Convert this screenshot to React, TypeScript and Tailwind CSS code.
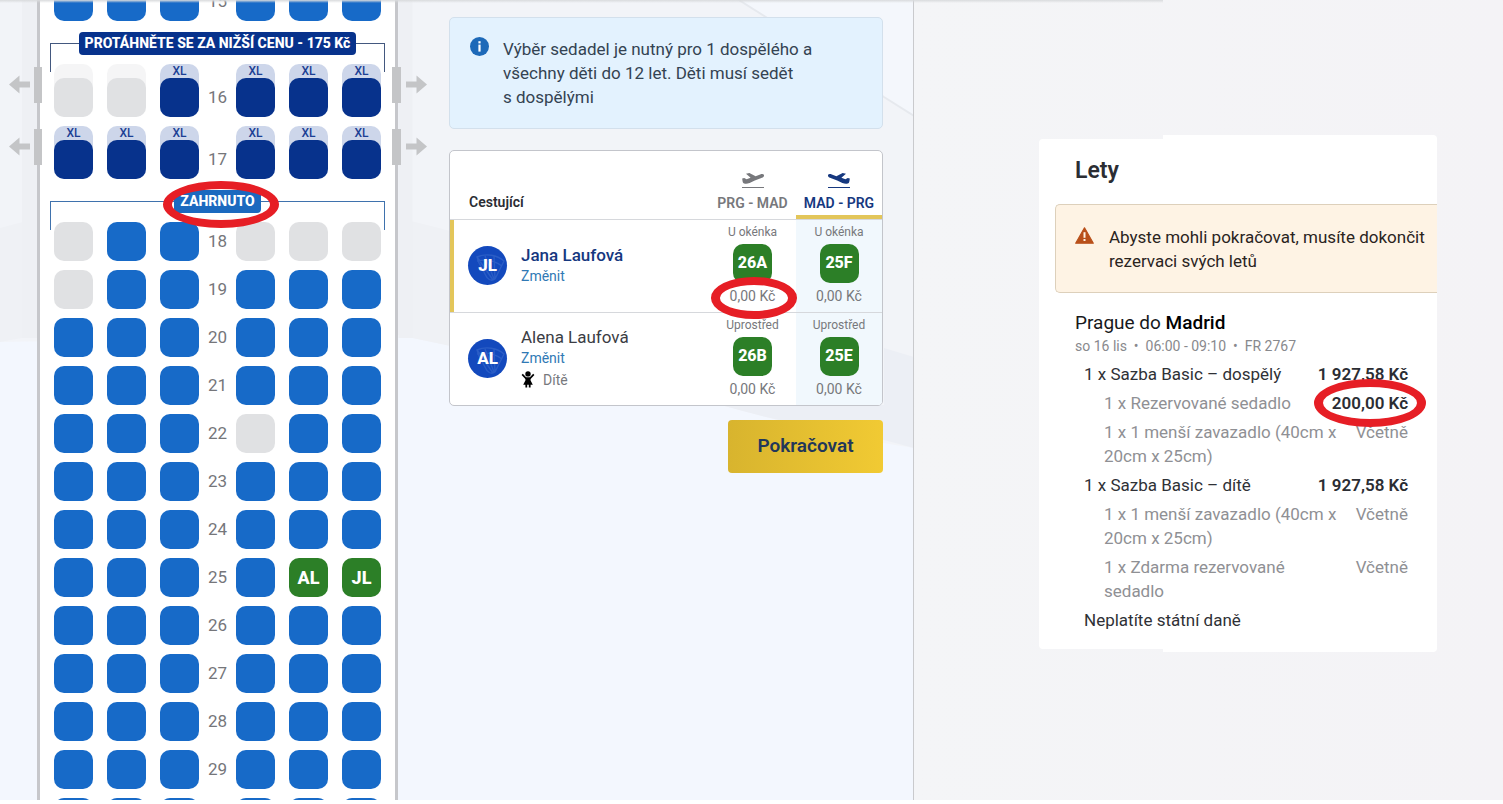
import { useState } from 'react';

type SeatKind = 'blue' | 'navy' | 'grey' | 'mine';

interface SeatRow {
  row: number;
  // one letter per seat: b = included, n = XL, x = taken
  seats: string;
  initials?: Record<number, string>;
}

interface PassengerSeat {
  position: string;
  seat: string;
  price: string;
}

interface Passenger {
  name: string;
  initials: string;
  child: boolean;
  seats: PassengerSeat[];
}

interface PriceLine {
  label: string;
  value?: string;
  nested?: boolean;
  bold?: boolean;
  circled?: boolean;
}

const COLUMNS = ['A', 'B', 'C', 'D', 'E', 'F'];

const legroomRows: SeatRow[] = [
  { row: 16, seats: 'xxnnnn' },
  { row: 17, seats: 'nnnnnn' },
];

const includedRows: SeatRow[] = [
  { row: 18, seats: 'xbbxxx' },
  { row: 19, seats: 'xbbbbb' },
  { row: 20, seats: 'bbbbbb' },
  { row: 21, seats: 'bbbbbb' },
  { row: 22, seats: 'bbbxbb' },
  { row: 23, seats: 'bbbbbb' },
  { row: 24, seats: 'bbbbbb' },
  { row: 25, seats: 'bbbbbb', initials: { 4: 'AL', 5: 'JL' } },
  { row: 26, seats: 'bbbbbb' },
  { row: 27, seats: 'bbbbbb' },
  { row: 28, seats: 'bbbbbb' },
  { row: 29, seats: 'bbbbbb' },
  { row: 30, seats: 'bbbbbb' },
];

const passengers: Passenger[] = [
  {
    name: 'Jana Laufová',
    initials: 'JL',
    child: false,
    seats: [
      { position: 'U okénka', seat: '26A', price: '0,00 Kč' },
      { position: 'U okénka', seat: '25F', price: '0,00 Kč' },
    ],
  },
  {
    name: 'Alena Laufová',
    initials: 'AL',
    child: true,
    seats: [
      { position: 'Uprostřed', seat: '26B', price: '0,00 Kč' },
      { position: 'Uprostřed', seat: '25E', price: '0,00 Kč' },
    ],
  },
];

const priceLines: PriceLine[] = [
  { label: '1 x Sazba Basic – dospělý', value: '1 927,58 Kč', bold: true },
  { label: '1 x Rezervované sedadlo', value: '200,00 Kč', nested: true, bold: true, circled: true },
  { label: '1 x 1 menší zavazadlo (40cm x 20cm x 25cm)', value: 'Včetně', nested: true },
  { label: '1 x Sazba Basic – dítě', value: '1 927,58 Kč', bold: true },
  { label: '1 x 1 menší zavazadlo (40cm x 20cm x 25cm)', value: 'Včetně', nested: true },
  { label: '1 x Zdarma rezervované sedadlo', value: 'Včetně', nested: true },
  { label: 'Neplatíte státní daně' },
];

const seatNotice =
  'Výběr sedadel je nutný pro 1 dospělého a všechny děti do 12 let. Děti musí sedět s\u00a0dospělými';

const seatColors: Record<SeatKind, string> = {
  blue: 'bg-[#176ac8]',
  navy: 'bg-[#07328c]',
  grey: 'bg-[#e0e1e3]',
  mine: 'bg-[#2c7f27]',
};

function Backdrop() {
  return (
    <svg
      className="absolute inset-0 -z-10 h-full w-full"
      viewBox="0 0 913 800"
      preserveAspectRatio="none"
      aria-hidden="true"
    >
      <rect width="913" height="800" fill="#f3f7fe" />
      <path d="M0 0H913V448C850 438 790 424 720 405C620 380 520 360 398 335L0 342Z" fill="#f2f4f8" />
      <path d="M0 228L38 218V335L0 342Z" fill="#eff1f5" />
      <path d="M398 218L450 231V346L398 335Z" fill="#eff1f5" />
      <path d="M883 348L913 357V448L883 440C830 432 780 422 720 405H883Z" fill="#eceff5" />
      <path d="M738 0H913V116L883 97L765 17Z" fill="#f4f7fc" />
      <path d="M738 0L765 17L883 97L913 116" fill="none" stroke="#e6e9ee" strokeWidth="2" />
      <path d="M22 0H38V338H22ZM398 0H412V338H398Z" fill="#eef0f4" />
    </svg>
  );
}

function Circled({ className }: { className: string }) {
  return (
    <span
      className={`pointer-events-none absolute z-10 rounded-[50%] border-x-[9px] border-y-[8px] border-[#e61e25] ${className}`}
    />
  );
}

function ArrowIcon({ flip }: { flip?: boolean }) {
  return (
    <svg width="21" height="19" viewBox="0 0 21 19" fill="#c4c5c7" className={flip ? 'rotate-180' : ''}>
      <path d="M0 9.5L10.5 .5V6.5H21V12.5H10.5V18.5Z" />
    </svg>
  );
}

function Exits() {
  return (
    <>
      <div className="absolute right-full top-0 mr-3 flex h-[41px] items-center gap-1">
        <ArrowIcon />
        <span className="h-9 w-2 bg-[#c4c5c7]" />
      </div>
      <div className="absolute left-full top-0 ml-[11px] flex h-[41px] items-center gap-[5px]">
        <span className="h-9 w-[9px] bg-[#c4c5c7]" />
        <ArrowIcon flip />
      </div>
    </>
  );
}

function Seat({ id, kind, xl, text }: { id: string; kind: SeatKind; xl?: boolean; text?: string }) {
  const body = (
    <span
      className={`flex h-[39px] w-[39px] items-center justify-center rounded-[10px] text-lg font-extrabold text-white ${seatColors[kind]}`}
    >
      {text}
    </span>
  );
  return (
    <button type="button" aria-label={`Sedadlo ${id}`} disabled={kind === 'grey'} className="block">
      {xl ? (
        <span className={`block rounded-[10px] ${kind === 'grey' ? 'bg-[#f5f5f6]' : 'bg-[#cdd6ea]'}`}>
          <span className="block h-[14px] text-center text-xs leading-[15px] font-medium text-[#1c3f94]">
            {kind === 'grey' ? '' : 'XL'}
          </span>
          {body}
        </span>
      ) : (
        body
      )}
    </button>
  );
}

function SeatMapRow({ data, xl }: { data: SeatRow; xl?: boolean }) {
  const renderSeat = (index: number) => {
    const text = data.initials?.[index];
    const code = data.seats[index];
    let kind: SeatKind = 'blue';
    if (text) kind = 'mine';
    else if (code === 'n') kind = 'navy';
    else if (code === 'x') kind = 'grey';
    return <Seat key={index} id={`${data.row}${COLUMNS[index]}`} kind={kind} xl={xl} text={text} />;
  };

  return (
    <div className="relative flex items-end">
      <div className="flex gap-[14px]">{[0, 1, 2].map(renderSeat)}</div>
      <div className="w-[37px] text-center text-[17px] leading-[39px] text-[#75767a]">{data.row}</div>
      <div className="flex gap-[14px]">{[3, 4, 5].map(renderSeat)}</div>
      {xl && <Exits />}
    </div>
  );
}

function ZoneLabel({ text, included }: { text: string; included?: boolean }) {
  return (
    <div className="relative flex justify-center">
      <div
        className={`pointer-events-none absolute -inset-x-1 top-[11px] h-[29px] border-x border-t ${
          included ? 'border-[#3f72ad]' : 'border-[#43587f]'
        }`}
      />
      <div
        className={`relative rounded-[4px] px-[6px] text-sm leading-[23px] font-extrabold whitespace-nowrap text-white ${
          included ? 'bg-[#1b69bf]' : 'bg-[#07328c]'
        }`}
      >
        {text}
        {included && <Circled className="-top-[9px] -right-[18px] -bottom-[15px] -left-[11px]" />}
      </div>
    </div>
  );
}

function SeatMap() {
  return (
    <section aria-label="Mapa sedadel" className="pl-[37px]">
      <div className="w-[361px] border-x-[3px] border-[#c6c7cb] bg-white px-[14px]">
        <div className="-mt-[18px] flex flex-col">
          <SeatMapRow data={{ row: 15, seats: 'bbbbbb' }} />
          <div className="mt-[11px] mb-[9px]">
            <ZoneLabel text="PROTÁHNĚTE SE ZA NIŽŠÍ CENU - 175 Kč" />
          </div>
          <div className="flex flex-col gap-[9px]">
            {legroomRows.map(r => (
              <SeatMapRow key={r.row} data={r} xl />
            ))}
          </div>
          <div className="mt-[11px] mb-[9px]">
            <ZoneLabel text="ZAHRNUTO" included />
          </div>
          <div className="flex flex-col gap-[9px]">
            {includedRows.map(r => (
              <SeatMapRow key={r.row} data={r} />
            ))}
          </div>
        </div>
      </div>
    </section>
  );
}

function InfoIcon() {
  return (
    <svg width="19" height="19" viewBox="0 0 19 19" className="shrink-0" aria-hidden="true">
      <circle cx="9.5" cy="9.5" r="9.5" fill="#1d69b8" />
      <rect x="8.4" y="4.2" width="2.2" height="2.2" fill="#fff" />
      <rect x="8.4" y="7.6" width="2.2" height="7" fill="#fff" />
    </svg>
  );
}

function WarningIcon() {
  return (
    <svg width="19" height="17" viewBox="0 0 19 17" className="shrink-0" aria-hidden="true">
      <path d="M9.5.8L18.3 16.2H.7Z" fill="#b9501a" stroke="#b9501a" strokeWidth="1.2" strokeLinejoin="round" />
      <rect x="8.5" y="5.2" width="2" height="5.6" fill="#fef3e4" />
      <rect x="8.5" y="12" width="2" height="2" fill="#fef3e4" />
    </svg>
  );
}

function PlaneIcon({ back }: { back?: boolean }) {
  return (
    <svg
      width="22"
      height="16"
      viewBox="0 0 22 16"
      fill="currentColor"
      className={back ? '-scale-x-100' : ''}
      aria-hidden="true"
    >
      <path d="M.2 5.4L2.2 4.9L4.6 6.2L8.6 4.8L4 .8L7.4 0L13.6 3.2L18.2 1.5C20.2.8 21.6 1.1 22 2.1C22.3 3.2 21.4 4.2 20 4.8L12.8 7.6L7.6 10C5 11.1 2 11 1.1 9.7C.6 8.7.4 7 .2 5.4Z" />
      <rect y="14" width="22" height="1" />
    </svg>
  );
}

function ChildIcon() {
  return (
    <svg width="14" height="17" viewBox="0 0 14 17" aria-hidden="true">
      <circle cx="7" cy="2.9" r="2.7" />
      <path d="M1.2 3.4L5 7.4H9L12.8 3.4" fill="none" stroke="#000" strokeWidth="1.7" />
      <path d="M4.6 6.6H9.4L9.6 9.4L11.8 13.8H9.6V16.6H7.8V13.8H6.2V16.6H4.4V13.8H2.2L4.4 9.4Z" />
    </svg>
  );
}

function Avatar({ initials }: { initials: string }) {
  return (
    <span className="relative flex h-[39px] w-[39px] shrink-0 items-center justify-center overflow-hidden rounded-full bg-[#1349bd]">
      <svg className="absolute inset-0" width="39" height="39" viewBox="0 0 39 39" aria-hidden="true">
        <path
          d="M9 11C18 7 29 9 36 15L27 33C23 36 19 33 17 28L11 17ZM9 11L25 34M17 10L26 33M26 10L27 33M9 15C18 13 27 15 34 20"
          fill="none"
          stroke="#2a5dc6"
          strokeWidth="1.4"
        />
      </svg>
      <span className="relative text-[17px] font-extrabold text-white">{initials}</span>
    </span>
  );
}

function PassengerTable() {
  const [active, setActive] = useState(0);

  return (
    <div className="mt-[21px] overflow-hidden rounded-[5px] border border-[#c3c5cb] bg-white">
      <table className="w-full table-fixed border-collapse">
        <colgroup>
          <col />
          <col className="w-[87px]" />
          <col className="w-[86px]" />
        </colgroup>
        <thead>
          <tr className="h-[68px] border-b border-[#d6d8dc] text-sm">
            <th className="p-0 pb-[7px] pl-[19px] text-left align-bottom font-semibold text-[#2b2d33]">Cestující</th>
            <th className="p-0 pb-[6px] align-bottom font-semibold text-[#77787c]">
              <span className="mb-1 flex justify-center">
                <PlaneIcon />
              </span>
              <span className="whitespace-nowrap">PRG - MAD</span>
            </th>
            <th className="p-0 pb-[6px] align-bottom font-semibold text-[#16387f] shadow-[inset_0_-4px_0_#e3c65a]">
              <span className="mb-1 flex justify-center">
                <PlaneIcon back />
              </span>
              <span className="whitespace-nowrap">MAD - PRG</span>
            </th>
          </tr>
        </thead>
        <tbody>
          {passengers.map((p, i) => (
            <tr key={p.name} className="border-b border-[#d6d8dc] last:border-b-0">
              <td
                className={`p-0 pl-[18px] align-middle ${i === active ? 'shadow-[inset_4px_0_0_#e3c65a]' : ''}`}
              >
                <div className="flex items-center gap-[14px]">
                  <Avatar initials={p.initials} />
                  <div>
                    <div
                      className={`text-[17px] leading-[21px] ${
                        i === active ? 'font-medium text-[#16387f]' : 'text-[#3b3d44]'
                      }`}
                    >
                      {p.name}
                    </div>
                    <button
                      type="button"
                      onClick={() => setActive(i)}
                      className="block text-sm leading-[21px] text-[#3079b5]"
                    >
                      Změnit
                    </button>
                    {p.child && (
                      <div className="flex items-center gap-2 text-sm leading-[22px] text-[#77787c]">
                        <ChildIcon />
                        Dítě
                      </div>
                    )}
                  </div>
                </div>
              </td>
              {p.seats.map((s, col) => (
                <td key={s.seat} className={`p-0 text-center text-[#77787c] ${col === 1 ? 'bg-[#f1f8fd]' : ''}`}>
                  <div className="pt-1 text-xs leading-4">{s.position}</div>
                  <button
                    type="button"
                    className="mx-auto mt-1 block h-[39px] w-[39px] rounded-[10px] bg-[#2c7f27] text-base font-extrabold text-white"
                  >
                    {s.seat}
                  </button>
                  <div className="mt-[3px] pb-[6px] text-sm leading-5">
                    <span className="relative">
                      {s.price}
                      {i === 0 && col === 0 && (
                        <Circled className="-top-[11px] -right-[22px] -bottom-[15px] -left-[19px]" />
                      )}
                    </span>
                  </div>
                </td>
              ))}
            </tr>
          ))}
        </tbody>
      </table>
    </div>
  );
}

function Passengers() {
  return (
    <section className="border-r border-[#c9cacd] pt-[17px] pr-[30px] pl-[51px]">
      <div className="flex gap-[14px] rounded-[5px] border border-[#d3e0ec] bg-[#e3f2fe] py-[19px] pr-5 pl-5 text-[17px] leading-6 text-[#344352]">
        <InfoIcon />
        <p>{seatNotice}</p>
      </div>
      <PassengerTable />
      <div className="mt-[14px] flex justify-end">
        <button
          type="button"
          className="h-[53px] w-[155px] rounded-[4px] bg-linear-to-r from-[#d8b42e] to-[#f1ca33] text-[19px] font-semibold text-[#22375a]"
        >
          Pokračovat
        </button>
      </div>
    </section>
  );
}

function FlightSummary() {
  return (
    <section className="min-w-0 flex-1 bg-linear-to-r from-[#f4f5f7] to-[#f4f3f6] pl-[125px]">
      <div className="relative mt-[139px] max-w-[398px] rounded-[4px] bg-white pt-4 pb-[17px]">
        <div className="absolute -top-1 right-0 -bottom-[3px] left-[124px] rounded-r-[4px] bg-white" />
        <div className="relative">
          <h2 className="pl-9 text-[23px] leading-8 font-semibold text-[#2b2d33]">Lety</h2>
          <div className="mt-[17px] ml-4 flex gap-[15px] rounded-l-[5px] border border-r-0 border-[#ddd0bb] bg-[#fef3e4] pt-5 pb-[19px] pl-[19px] text-[17px] leading-6 text-[#2a241e]">
            <div className="pt-0.5">
              <WarningIcon />
            </div>
            <p>Abyste mohli pokračovat, musíte dokončit rezervaci svých letů</p>
          </div>
          <div className="mt-[18px] pr-[29px] pl-9">
            <h3 className="text-[19px] leading-6 text-[#17181b]">
              Prague do <span className="font-medium text-black">Madrid</span>
            </h3>
            <p className="text-sm leading-[22px] whitespace-pre text-[#88898d]">
              so 16 lis  •  06:00 - 09:10  •  FR 2767
            </p>
            <ul className="mt-[5px] flex flex-col gap-[5px] pl-[9px] text-[17px] leading-6">
              {priceLines.map((line, i) => (
                <li key={i} className="flex items-start justify-between text-[#2f3136]">
                  <span className={line.nested ? 'w-[262px] pl-5 text-[#8f9094]' : ''}>{line.label}</span>
                  {line.value && (
                    <span
                      className={`relative whitespace-nowrap ${
                        line.bold ? 'font-semibold text-[#2b2d33]' : 'text-[#8f9094]'
                      }`}
                    >
                      {line.value}
                      {line.circled && <Circled className="-inset-x-[18px] -inset-y-3" />}
                    </span>
                  )}
                </li>
              ))}
            </ul>
          </div>
        </div>
      </div>
    </section>
  );
}

export default function App() {
  return (
    <div className="h-screen bg-white pb-1 font-[Roboto,sans-serif]">
      <main className="relative flex h-full overflow-hidden">
        <div className="relative isolate grid grid-cols-[398px_516px]">
          <Backdrop />
          <SeatMap />
          <Passengers />
        </div>
        <FlightSummary />
        <div className="pointer-events-none absolute inset-x-0 top-0 h-[3px] max-w-[1163px] bg-linear-to-b from-[#d9dbdd] to-transparent" />
      </main>
    </div>
  );
}
